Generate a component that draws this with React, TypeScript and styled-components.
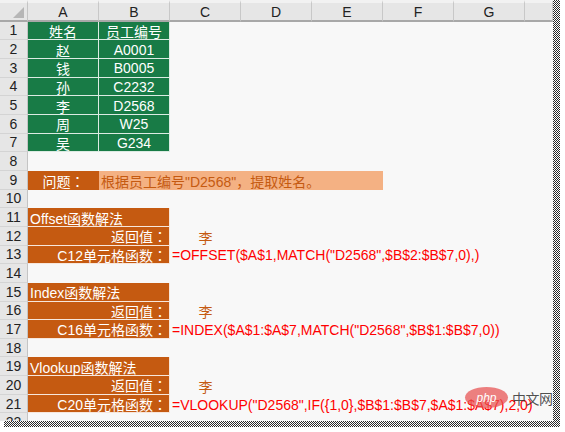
import React from 'react';
import styled, { createGlobalStyle, css } from 'styled-components';

const Global = createGlobalStyle`
  *, *::before, *::after { box-sizing: border-box; }
  html, body { margin: 0; padding: 0; background: #fff; }
  body { font-family: "Liberation Sans", "Noto Sans CJK SC", sans-serif; }
`;

const GREEN = '#187b46';
const ORANGE = '#c55a11';
const LIGHT = '#f4b183';
const RED = '#ff0000';
const ROW_H = 18.667;

const Frame = styled.div`
  width: 565px;
  height: 432px;
  display: grid;
  grid-template-columns: 553px 7px 5px;
  grid-template-rows: 421px 6px 5px;
  background: #fff;
`;

const Sheet = styled.div`
  grid-column: 1;
  grid-row: 1;
  position: relative;
  overflow: hidden;
  display: grid;
  grid-template-columns: 28px repeat(7, 71px) 28px;
  grid-template-rows: 21.67px repeat(22, ${ROW_H}px);
  background: #f8f8f8;
  font-family: "Liberation Sans", "Noto Sans CJK SC", sans-serif;
  font-size: 14px;
`;

const Torn = styled.div<{ $side: 'right' | 'bottom' }>`
  background: repeating-conic-gradient(#2b2b2b 0 25%, #ffffff 0 50%) 0 0 / 2px 2px;
  ${(p) =>
    p.$side === 'right'
      ? css`
          grid-column: 2;
          grid-row: 1 / 3;
        `
      : css`
          grid-column: 1 / 3;
          grid-row: 2;
          margin-left: 4px;
        `}
`;

const HeadBase = css`
  background: #e6e6e6;
  color: #222;
  display: flex;
  align-items: center;
  justify-content: center;
  font-size: 14px;
`;

const Corner = styled.div`
  ${HeadBase};
  grid-row: 1;
  grid-column: 1;
  position: relative;
  border-top: 3px solid #f2f2f2;
  border-right: 1px solid #c4c4c4;
  border-bottom: 2px solid #a8a8a8;
  &::after {
    content: '';
    position: absolute;
    right: 3px;
    bottom: 2px;
    width: 0;
    height: 0;
    border-left: 11px solid transparent;
    border-bottom: 11px solid #b6b6b6;
  }
`;

const ColHead = styled.div<{ $col: number }>`
  ${HeadBase};
  grid-row: 1;
  grid-column: ${(p) => p.$col};
  padding-top: 1px;
  border-top: 3px solid #f2f2f2;
  border-right: 1px solid #c8c8c8;
  border-bottom: 2px solid #a8a8a8;
`;

const RowHead = styled.div<{ $row: number }>`
  ${HeadBase};
  grid-column: 1;
  grid-row: ${(p) => p.$row};
  border-right: 1px solid #c4c4c4;
  border-bottom: 1px solid #d4d4d4;
`;

const Cell = styled.div<{
  $row: number;
  $col: number;
  $span?: number;
  $bg?: string;
  $fg?: string;
  $align?: 'left' | 'center' | 'right';
  $boxed?: boolean;
}>`
  grid-row: ${(p) => p.$row};
  grid-column: ${(p) => p.$col} / span ${(p) => p.$span ?? 1};
  display: flex;
  align-items: center;
  justify-content: ${(p) =>
    p.$align === 'center' ? 'center' : p.$align === 'right' ? 'flex-end' : 'flex-start'};
  padding: 1px 2px 0 2px;
  white-space: nowrap;
  background: ${(p) => p.$bg ?? 'transparent'};
  color: ${(p) => p.$fg ?? '#000'};
  ${(p) =>
    p.$boxed &&
    css`
      border-right: 1px solid rgba(255, 255, 255, 0.85);
      border-bottom: 1px solid rgba(255, 255, 255, 0.85);
    `}
`;

/* full-width colon drawn centred in its em box, as in the reference */
const Colon = styled.span`
  font-family: "Noto Sans CJK TC", "Noto Sans CJK SC", sans-serif;
`;

const Watermark = styled.div`
  position: absolute;
  left: 465px;
  top: 387px;
  display: flex;
  align-items: center;
  gap: 4px;
  pointer-events: none;
`;

const PhpBadge = styled.span`
  width: 43px;
  height: 21px;
  border-radius: 50%;
  background: rgba(232, 80, 80, 0.72);
  color: #fff;
  font-family: "Liberation Sans", sans-serif;
  font-style: italic;
  font-size: 12px;
  display: flex;
  align-items: center;
  justify-content: center;
`;

const CnMark = styled.span`
  color: rgba(50, 50, 50, 0.85);
  font-family: "Noto Sans CJK SC", sans-serif;
  font-size: 14px;
  letter-spacing: -0.5px;
`;

const staff: [string, string][] = [
  ['姓名', '员工编号'],
  ['赵', 'A0001'],
  ['钱', 'B0005'],
  ['孙', 'C2232'],
  ['李', 'D2568'],
  ['周', 'W25'],
  ['吴', 'G234'],
];

const methods = [
  { row: 11, title: 'Offset函数解法', cell: 'C12', formula: '=OFFSET($A$1,MATCH("D2568",$B$2:$B$7,0),)' },
  { row: 15, title: 'Index函数解法', cell: 'C16', formula: '=INDEX($A$1:$A$7,MATCH("D2568",$B$1:$B$7,0))' },
  { row: 19, title: 'Vlookup函数解法', cell: 'C20', formula: '=VLOOKUP("D2568",IF({1,0},$B$1:$B$7,$A$1:$A$7),2,0)' },
];

const COLS = ['A', 'B', 'C', 'D', 'E', 'F', 'G', ''];

export default function App() {
  return (
    <>
      <Global />
      <Frame>
        <Sheet>
          <Corner />
          {COLS.map((c, i) => (
            <ColHead key={i} $col={i + 2}>
              {c}
            </ColHead>
          ))}
          {Array.from({ length: 22 }, (_, i) => (
            <RowHead key={i} $row={i + 2}>
              {i + 1}
            </RowHead>
          ))}

          {staff.map(([name, id], i) => (
            <React.Fragment key={id}>
              <Cell $row={i + 2} $col={2} $bg={GREEN} $fg="#fff" $align="center" $boxed>
                {name}
              </Cell>
              <Cell $row={i + 2} $col={3} $bg={GREEN} $fg="#fff" $align="center" $boxed>
                {id}
              </Cell>
            </React.Fragment>
          ))}

          <Cell $row={10} $col={2} $bg={ORANGE} $fg="#fff" $align="center">
            问题<Colon>：</Colon>
          </Cell>
          <Cell $row={10} $col={3} $span={4} $bg={LIGHT} $fg={ORANGE}>
            根据员工编号"D2568"，提取姓名。
          </Cell>

          {methods.map((m) => (
            <React.Fragment key={m.row}>
              <Cell $row={m.row + 1} $col={2} $span={2} $bg={ORANGE} $fg="#fff" $boxed>
                {m.title}
              </Cell>
              <Cell $row={m.row + 2} $col={2} $span={2} $bg={ORANGE} $fg="#fff" $align="right" $boxed>
                返回值<Colon>：</Colon>
              </Cell>
              <Cell $row={m.row + 2} $col={4} $fg={ORANGE} $align="center">
                李
              </Cell>
              <Cell $row={m.row + 3} $col={2} $span={2} $bg={ORANGE} $fg="#fff" $align="right" $boxed>
                {m.cell}单元格函数<Colon>：</Colon>
              </Cell>
              <Cell $row={m.row + 3} $col={4} $fg={RED}>
                {m.formula}
              </Cell>
            </React.Fragment>
          ))}

          <Watermark>
            <PhpBadge>php</PhpBadge>
            <CnMark>中文网</CnMark>
          </Watermark>
        </Sheet>
        <Torn $side="right" />
        <Torn $side="bottom" />
      </Frame>
    </>
  );
}
